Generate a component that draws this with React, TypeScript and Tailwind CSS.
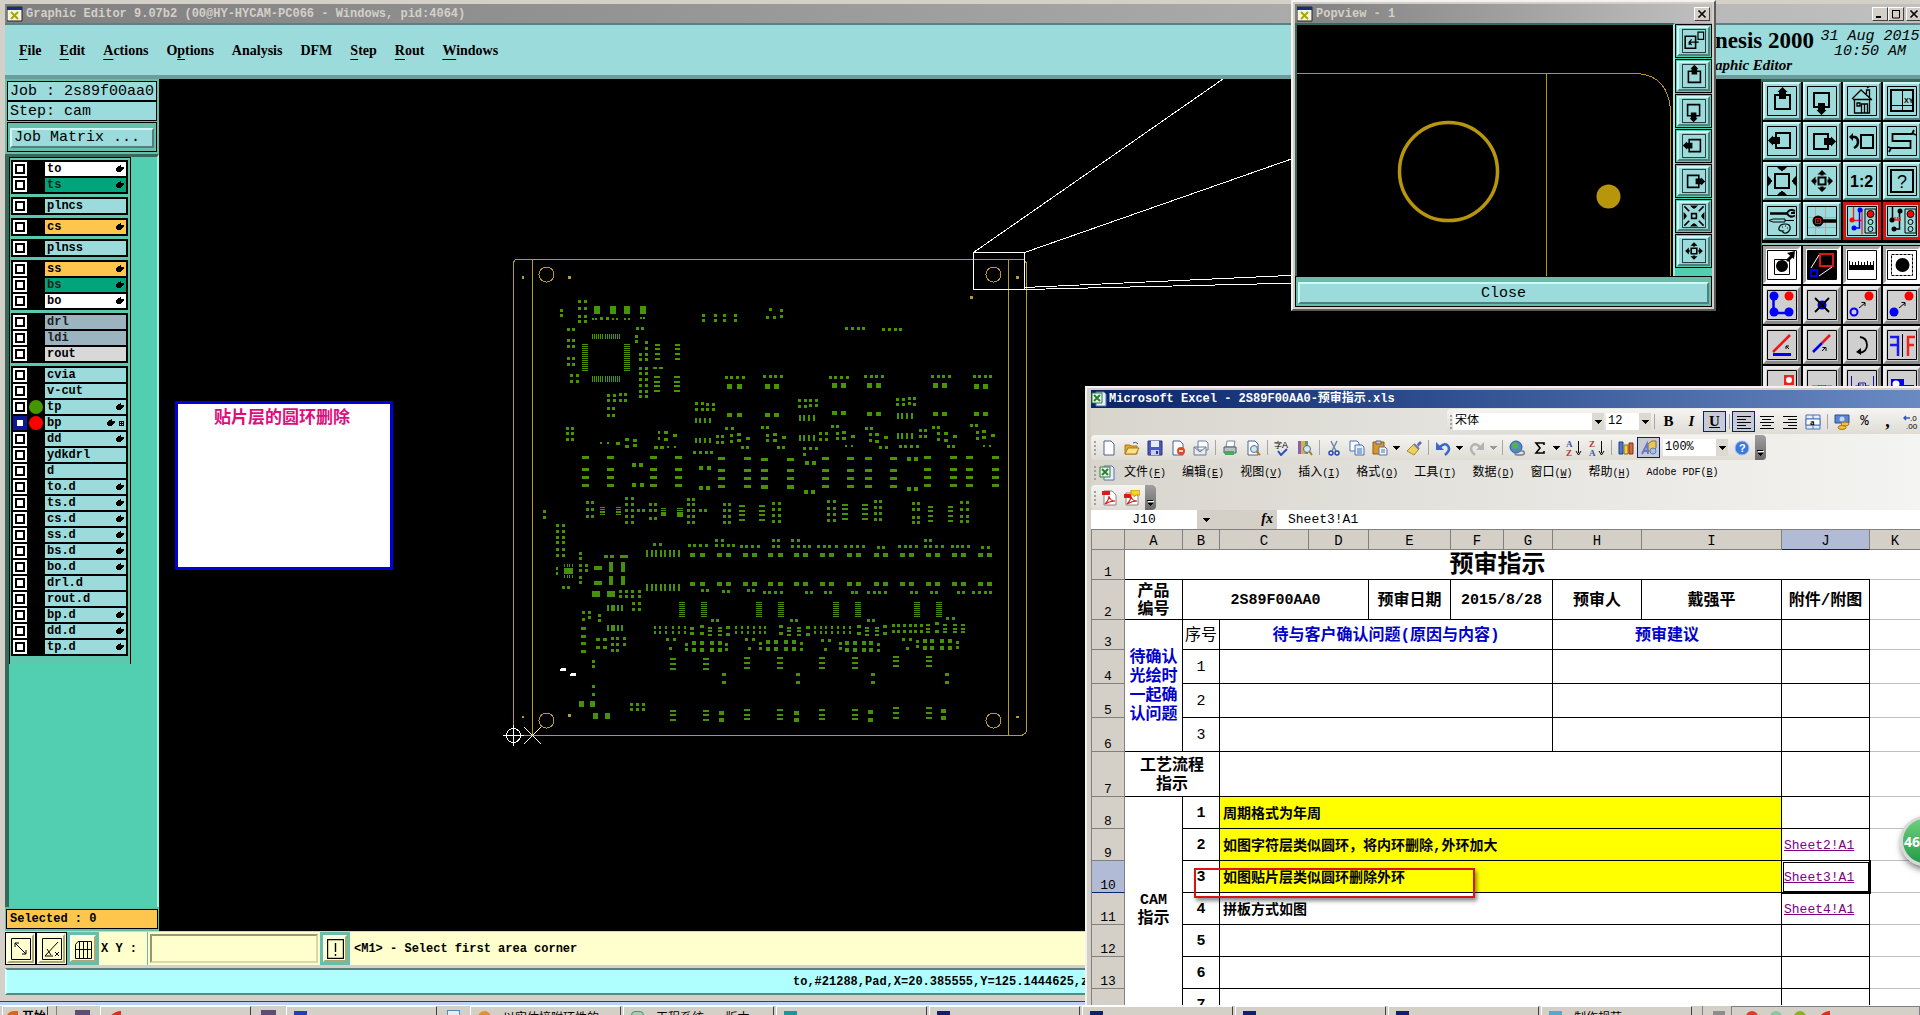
import React from 'react';

const tealBevel = 'border-2 border-t-[#d2f6f6] border-l-[#d2f6f6] border-r-[#4f7f7f] border-b-[#4f7f7f] bg-[#9bdbdb]';
const grayBevel = 'border-3 border-t-[#ececec] border-l-[#ececec] border-r-[#8a8a8a] border-b-[#8a8a8a] bg-[#cfcfcf]';
const whiteBevel = 'border-3 border-t-[#a8a8a8] border-l-[#a8a8a8] border-r-[#ffffff] border-b-[#ffffff] bg-white';
const redBevel = 'border-3 border-[#d41414] bg-[#9bdbdb]';
const winBevel = 'border border-t-white border-l-white border-r-[#404040] border-b-[#404040] bg-[#d4d0c8]';

const mono = "font-['Liberation_Mono','Noto_Sans_CJK_SC',monospace]";
const serif = "font-['Liberation_Serif','Noto_Sans_CJK_SC',serif]";
const cjk = "font-['Liberation_Mono','Noto_Sans_CJK_SC',sans-serif]";

/* ---------- layer list ---------- */

type Layer = { name: string; bg?: string; hand?: boolean; dot?: string; active?: boolean };

const AQUA = 'bg-[#9bdbdb] text-black';
const GREEN = 'bg-[#02a47c] text-[#042a18]';
const ORANGE = 'bg-[#fec64d] text-black';
const WHITE = 'bg-white text-black';
const SLATE = 'bg-[#9bb4bf] text-[#202020]';
const SILVER = 'bg-[#d8d8d8] text-black';

const layerGroups: Layer[][] = [
  [{ name: 'to', bg: WHITE, hand: true }, { name: 'ts', bg: GREEN, hand: true }],
  [{ name: 'plncs' }],
  [{ name: 'cs', bg: ORANGE, hand: true }],
  [{ name: 'plnss' }],
  [{ name: 'ss', bg: ORANGE, hand: true }, { name: 'bs', bg: GREEN, hand: true }, { name: 'bo', bg: WHITE, hand: true }],
  [{ name: 'drl', bg: SLATE }, { name: 'ldi', bg: SLATE }, { name: 'rout', bg: SILVER }],
  [
    { name: 'cvia' },
    { name: 'v-cut' },
    { name: 'tp', hand: true, dot: 'bg-[#469600]' },
    { name: 'bp', hand: true, dot: 'bg-[#ff0000]', active: true },
    { name: 'dd', hand: true },
    { name: 'ydkdrl' },
    { name: 'd' },
    { name: 'to.d', hand: true },
    { name: 'ts.d', hand: true },
    { name: 'cs.d', hand: true },
    { name: 'ss.d', hand: true },
    { name: 'bs.d', hand: true },
    { name: 'bo.d', hand: true },
    { name: 'drl.d' },
    { name: 'rout.d' },
    { name: 'bp.d', hand: true },
    { name: 'dd.d', hand: true },
    { name: 'tp.d', hand: true },
  ],
];

const Hand = () => (
  <svg width="8" height="8" viewBox="0 0 8 8" shapeRendering="crispEdges">
    <path d="M4 0h1v2h3v2h-1v1h-1v1h-1v1h-4v-1h-1v-3h1v-1h1v-1h2z" fill="#000" />
  </svg>
);

const LayerRow = ({ layer }: { layer: Layer }) => (
  <label className="flex h-[14px] items-center">
    <input
      type="checkbox"
      className={`m-[2px] size-[10px] shrink-0 appearance-none border-2 bg-white ring-2 ${
        layer.active ? 'border-[#0a1a96] ring-[#0a1a96]' : 'border-black ring-white'
      }`}
    />
    <span className="flex w-[18px] justify-center">
      {layer.dot && <span className={`size-[14px] rounded-full ${layer.dot}`}></span>}
    </span>
    <span className={`flex h-[14px] flex-1 items-center gap-1 pl-[2px] pr-[2px] text-[12px] font-bold leading-[14px] ${layer.bg || AQUA}`}>
      <span className="flex-1">{layer.name}</span>
      {layer.hand && <Hand />}
      {layer.active && (
        <svg width="5" height="5" viewBox="0 0 5 5" shapeRendering="crispEdges">
          <path d="M0 0h5v5h-5zM1 1v1h1v-1zM3 1v1h1v-1zM1 3v1h1v-1zM3 3v1h1v-1z" fillRule="evenodd" />
        </svg>
      )}
    </span>
  </label>
);

const Sidebar = () => (
  <aside className={`flex w-[154px] flex-col bg-[#67bfa9] ${mono}`}>
    <div className="mx-[2px] mt-[2px] h-[20px] overflow-hidden border border-black bg-[#9bdbdb] pl-[2px] text-[15px] leading-[20px] whitespace-nowrap">
      Job : 2s89f00aa0
    </div>
    <div className="mx-[2px] h-[20px] border border-black bg-[#9bdbdb] pl-[2px] text-[15px] leading-[19px]">Step: cam</div>
    <div className="mx-[2px] mt-px border border-black p-[2px]">
      <button className={`h-[20px] w-full pl-[2px] text-left text-[15px] leading-[16px] ${tealBevel}`}>Job Matrix ...</button>
    </div>
    <div className="mt-[2px] flex flex-1 items-start border-l-4 border-r-2 border-t-[3px] border-l-[#36695c] border-r-[#a5f0de] border-t-[#36695c] bg-[#52cfb0]">
      <div className="flex w-[122px] flex-col gap-[3px] border border-b-0 border-black bg-[#5cc8ae] px-px pt-[2px] pb-[8px]">
        {layerGroups.map((group, i) => (
          <div key={i} className="flex w-[117px] flex-col gap-[2px] border-2 border-black bg-black">
            {group.map((layer) => (
              <LayerRow key={layer.name} layer={layer} />
            ))}
          </div>
        ))}
      </div>
    </div>
    <div className="mx-px mt-[2px] mb-[2px] h-[20px] border border-black bg-[#fec64d] pl-[3px] text-[12px] font-bold leading-[18px]">
      Selected : 0
    </div>
  </aside>
);

/* ---------- board drawing ---------- */

// Every entry is [pad width, pad height, "cx,cy cx,cy ..."] in board units.
type Pads = [number, number, string];

const grid = (xs: number[], ys: number[]) => xs.flatMap((x) => ys.map((y) => `${x},${y}`)).join(' ');
const run = (from: number, step: number, n: number) => Array.from({ length: n }, (_, i) => from + i * step);

const upperPads: Pads[] = [
  [17, 24, '276,210 322,210 362,210 407,210'],
  [6, 6, '265,237 273,237 322,237 333,237 357,237 367,237 403,234 410,234 289,609 308,609 480,621 499,621 988,618 1003,618 1379,618 1396,618'],
  [9, 9, '175,212 175,227 289,236 306,236 392,266 406,266 389,288 389,304'],
  [9, 9, grid([226, 243], [184, 205, 229, 244])],
  [9, 9, grid([195, 211], [268, 301, 319, 355, 373])],
  [9, 9, grid([204, 221], [406, 424])],
  [4, 15, grid(run(264, 6, 14), [290])],
  [4, 18, grid(run(264, 6, 14), [417])],
  [17, 4, grid([243, 362], run(314, 6, 14))],
  [9, 9, grid([400, 417], [343, 358, 384, 401, 419, 436, 454, 469]) + ' 417,308 417,325'],
  [14, 6, grid([449, 506], [314, 327, 342, 356])],
  [16, 6, grid([447, 504], [411, 426, 438, 453])],
  [10, 6, '440,384 459,384'],
  [9, 9, grid([580, 614, 640, 671], [227, 241])],
  [8, 10, '771,208 802,211 762,234 782,234 802,231'],
  [9, 9, grid([988, 1005, 1022, 1037], [265]) + ' ' + grid([1094, 1111, 1127, 1142], [268])],
  [9, 9, grid([645, 661, 677, 694, 942, 957, 974, 990], [412])],
  [9, 9, grid([754, 770, 787, 802, 1043, 1058, 1074, 1090, 1233, 1249, 1265, 1281, 1353, 1368, 1385, 1400], [409])],
  [14, 14, '654,439 683,439 762,439 788,439 954,435 979,435 1053,436 1080,436 1241,436 1267,436 1358,438 1384,438'],
  [14, 12, '654,525 683,525 762,525 788,525 954,520 979,520 1053,522 1080,522 1241,522 1267,522 1358,523 1384,523'],
  [9, 9, '309,467 326,467 343,464 359,464 309,482 326,482 343,482 359,482 309,505 325,505 309,525 325,525'],
  [9, 9, grid([192, 207], [565, 580, 598])],
  [10, 8, '336,610 362,598 383,601 362,619 383,616 473,577 473,598 499,586 444,622 460,622'],
  [6, 9, '453,577 453,595'],
  [9, 9, '560,490 577,490 593,493 608,493 560,508 577,508 593,508 608,508'],
  [9, 9, '854,482 871,482 886,482 902,482 854,499 871,499 886,496 902,496'],
  [9, 9, '1133,478 1150,478 1167,475 1183,475 1133,493 1150,493 1167,490 1183,493'],
  [5, 15, grid([559, 570, 585, 599], [541, 601])],
  [5, 18, grid([855, 867, 881, 895], [534, 594])],
  [5, 18, grid([1135, 1147, 1160, 1174], [528, 587])],
  [8, 8, '554,637 571,637 588,637 604,637 868,625 886,625 902,625 868,643 1141,619 1157,619 1173,619 1190,619'],
  [8, 9, '646,565 662,565 620,590 634,590 620,607 634,607 660,587 660,604 691,622 706,622 748,562 763,562 762,587 762,601 794,622 809,622'],
  [11, 8, '681,583 681,601 707,594 783,583 783,601 809,592 981,578 981,596 1006,589 1076,583 1076,603 1101,592 1270,580 1270,601 1296,589 1380,574 1380,592 1405,586'],
  [8, 9, '914,580 931,580 914,598 931,598 947,560 962,560 963,580 963,596 1045,565 1058,565 1056,583 1056,601 1085,622 1101,622'],
  [8, 9, '1199,571 1213,571 1199,589 1213,589 1236,562 1250,562 1250,580 1250,598 1279,619 1294,619 1344,556 1359,556 1361,577 1361,595'],
  [20, 9, grid([244, 315, 438, 509, 1219, 1293, 1338, 1412], [652, 688, 712, 736])],
  [20, 9, grid([631, 706, 928, 999, 1051, 1122], [655, 691, 715, 739])],
  [20, 9, grid([754, 828], [658, 691, 715, 741])],
  [11, 13, '382,676 403,676 383,735 405,735 574,685 596,685 573,744 594,744 1165,657 1186,657 1165,747 1187,747 874,669 895,669 872,756 892,756'],
];

const lowerPads: Pads[] = [
  [20, 8, grid([244, 315, 438, 509, 1219, 1293, 1338, 1412], [16]) + ' ' + grid([631, 706, 754, 828, 928, 999, 1051, 1122], [19])],
  [8, 8, '127,94 127,112'],
  [9, 9, grid([249, 263], [67, 87, 109])],
  [14, 3, grid([292, 338], [82, 87, 93, 98, 104])],
  [9, 9, grid([361, 377], [55, 73, 91, 109, 127])],
  [9, 9, '395,91 409,91 429,73 443,73 429,91 443,91 429,115 443,115 572,91 585,91'],
  [14, 4, grid([466], [85, 91, 97])],
  [17, 4, grid([513], [85, 91, 97])],
  [17, 12, '513,104'],
  [14, 10, '466,105'],
  [9, 9, grid([538, 551], [58, 73, 91, 109, 127])],
  [9, 9, grid([640, 654], [73, 91, 109, 127])],
  [17, 6, grid([689, 746], [78, 92, 105, 120])],
  [9, 9, grid([780, 796], [70, 88, 106, 124])],
  [9, 9, grid([937, 953], [64, 85, 103, 121])],
  [17, 6, grid([983, 1040], [75, 88, 102, 117])],
  [9, 9, grid([1071, 1086], [64, 82, 100, 118])],
  [9, 9, grid([1179, 1193], [70, 88, 111, 127])],
  [14, 6, grid([1227, 1284], [81, 94, 108, 123])],
  [9, 9, grid([1317, 1332], [67, 87, 109, 124])],
  [9, 9, grid([164, 181], [136, 154, 172, 187, 208, 226])],
  [26, 18, '195,273'],
  [4, 9, grid([185, 192, 199, 206], [256, 289])],
  [5, 8, '162,266 162,280'],
  [9, 9, '229,220 229,235 229,257 246,257 229,271 246,271 229,291 229,307 181,322 195,322'],
  [11, 9, '302,229 320,229 347,229 360,229'],
  [23, 12, '279,264 279,309'],
  [11, 30, '316,261 350,261'],
  [11, 26, '316,301 350,301'],
  [23, 18, '273,342 316,342'],
  [9, 9, grid([343, 360, 377, 397], [335, 349])],
  [9, 9, grid([380, 397], [370, 388])],
  [5, 21, grid(run(419, 13, 8), [220, 322])],
  [9, 8, '440,193 457,193'],
  [9, 9, grid([541, 555, 571, 588, 617, 634, 651, 665], [196])],
  [9, 9, grid([617, 634, 780, 794, 834, 850, 1213, 1229], [181])],
  [9, 9, grid([688, 702, 721, 736, 780, 794, 834, 850, 868, 884, 908, 924, 941, 959], [199])],
  [9, 9, grid([985, 1001, 1019, 1036, 1139, 1155, 1171, 1187, 1213, 1229, 1245, 1261, 1290, 1304, 1320, 1336], [199])],
  [9, 9, '1080,202 1095,202 1376,202 1392,202'],
  [14, 12, grid([549, 576, 626, 651, 700, 725, 771, 799, 844, 871, 919, 946, 995, 1022, 1072, 1098, 1147, 1173, 1221, 1247, 1296, 1321, 1370, 1395], [225, 312])],
  [8, 8, '577,332 591,332 637,335 651,335 708,331 722,331'],
  [9, 8, grid([754, 769, 785, 802, 875, 889, 928, 942, 1005, 1018, 1051, 1067, 1083, 1099, 1174, 1189, 1230, 1246, 1307, 1321, 1350, 1367, 1383, 1398], [337])],
  [17, 3, grid([518, 581, 738, 801, 957, 1020, 1188, 1251], run(367, 6, 8))],
  [5, 18, grid([308, 318, 324, 335, 348], [384, 444])],
  [9, 9, '238,397 255,397 238,417 255,412 283,406 283,421'],
  [14, 9, '238,446 238,468 238,490 238,513'],
  [10, 10, grid([279, 300], [480, 504])],
  [9, 9, grid([320, 335, 355], [476, 493]) + ' 320,511 335,511'],
  [6, 9, grid([442, 457, 474, 492, 510, 528, 674, 690, 707, 725, 741, 757, 898, 914, 930, 947, 964, 981, 998], [443, 457])],
  [8, 9, grid([1121, 1137, 1153, 1169, 1185, 1201], [437, 454])],
  [12, 10, '549,446 549,460 576,440 576,462 651,443 651,464 802,440 802,462 877,443 877,464 1025,440 1025,462 1099,440 1099,462 1247,432 1247,455'],
  [11, 5, grid([598, 627, 824, 852, 1046, 1074], [443, 453, 463]) + ' ' + grid([1219, 1268, 1297, 1320], [435, 445, 455])],
  [9, 8, '606,421 619,421 831,421 845,421 1051,421 1066,421 1276,415 1292,415'],
  [8, 10, '477,480 497,480 486,506 531,494 531,509 702,480 722,480 711,506 742,491 742,506 919,483 939,483 928,509 970,491 970,506 1150,480 1170,480 1161,506 1190,485 1190,500'],
  [12, 11, grid([553, 576, 604, 627], [489, 510]) + ' ' + grid([764, 787, 817, 839], [486, 507])],
  [12, 11, grid([991, 1012, 1037, 1058], [489, 510]) + ' ' + grid([1211, 1233, 1261, 1283], [483, 504])],
  [8, 8, '645,494 645,509 859,491 859,508 1079,494 1079,510 1304,488 1304,502'],
  [17, 7, grid([493, 587], [538, 552, 566]) + ' ' + grid([704, 798, 918, 1012], [535, 548, 563])],
  [17, 6, grid([1129, 1223], [531, 543, 558])],
  [11, 10, '638,585 638,607 849,585 849,607 1063,585 1063,607 1273,585 1273,607'],
  [9, 10, '266,545 266,559 266,621 266,645'],
  [14, 18, '232,672 265,672 272,708 305,708'],
  [8, 9, grid([375, 392, 409], [673, 688])],
  [17, 6, grid([493, 587], [693, 706, 720]) + ' ' + grid([704, 798, 918, 1012], [690, 704, 718])],
  [17, 6, grid([1129, 1223], [685, 699, 714])],
  [13, 11, '631,699 631,720 844,698 844,720 1055,696 1055,718 1264,693 1264,714'],
];

const toPath = (pads: Pads[]) =>
  pads
    .map(([w, h, pts]) =>
      pts
        .split(' ')
        .map((p) => {
          const [x, y] = p.split(',').map(Number);
          const px = Math.round((x - w / 2) / 2.851);
          const py = Math.round((y - h / 2) / 3);
          const pw = Math.max(1, Math.round(w / 2.851));
          const ph = Math.max(1, Math.round(h / 3));
          return `M${px} ${py}h${pw}v${ph}h-${pw}z`;
        })
        .join(''),
    )
    .join('');

const Board = () => (
  <svg className="absolute left-0 top-0" width="1602" height="852" viewBox="159 79 1602 852" shapeRendering="crispEdges">
    <g fill="none" stroke="#b89a2e" strokeWidth="1">
      <path d="M516.5 259.5H1022.5Q1026.5 260.5 1026.5 265V729Q1026.5 734.5 1021 735.5H513.5V264Q513.5 260 516.5 259.5zM532.5 259.5V735.5M1008.5 259.5V735.5" />
      <circle cx="546.5" cy="274.5" r="7.5" />
      <circle cx="993.5" cy="274.5" r="7.5" />
      <circle cx="546.5" cy="720.5" r="7.5" />
      <circle cx="993.5" cy="720.5" r="7.5" />
    </g>
    <path d="M522 276h2v3h-2zM568 276h3v3h-3zM1016 276h3v3h-3zM970 296h3v3h-3zM522 716h2v2h-2zM568 714h3v3h-3zM1016 716h3v2h-3z" fill="#b89a2e" />
    <path d={toPath(upperPads)} transform="translate(500 240)" fill="#469600" />
    <path d={toPath(lowerPads)} transform="translate(500 480)" fill="#46900c" />
    <path d="M561 668h5v3h-6v-2zM571 673h5v3h-6v-2z" fill="#fff" />
    <g fill="none" stroke="#fff" strokeWidth="1">
      <path d="M973.5 252.5h51v37h-51zM973.5 252.5L1223 79M1024.5 252.5L1300 156M1024.5 287.5L1300 275M1024.5 289.5L1300 283" />
      <circle cx="513.5" cy="735.5" r="7" />
      <path d="M503 735.5h21M513.5 725v21M524 727l17 17M541 727l-17 17" />
    </g>
  </svg>
);

/* ---------- tool icons, drawn on a 30x30 cell ---------- */

const PanIcon = ({ turn = 0 }: { turn?: number }) => (
  <g transform={`rotate(${turn} 15 15)`}>
    <path d="M8 9h15v14H8z" fill="none" stroke="#000" strokeWidth="2" />
    <path d="M15.5 1l5 5h-1.5v7h-7v-7h-1.500z" fill="#000" />
  </g>
);

const Heads = ({ r, inward }: { r: number; inward?: boolean }) => (
  <>
    {[0, 90, 180, 270].map((a) => (
      <path
        key={a}
        transform={`rotate(${a} 15 15)`}
        d={inward ? `M10 ${15 - r - 4}h10l-3 3h-1v1h-2v-1h-1z` : `M15 ${15 - r - 4}l4.500 4.500h-3v1h-3v-1h-3z`}
      />
    ))}
  </>
);

const Lamp = () => (
  <>
    <path d="M18 3h11v24H18z" fill="#9bdbdb" stroke="#000" />
    <circle cx="23.500" cy="8" r="3.500" fill="#f00" stroke="#000" />
    <circle cx="23.500" cy="16" r="2.500" fill="none" stroke="#000" />
    <circle cx="23.500" cy="23" r="2.500" fill="none" stroke="#000" />
  </>
);

const icons: Record<string, React.ReactNode> = {
  up: <PanIcon />,
  down: <PanIcon turn={180} />,
  left: <PanIcon turn={270} />,
  right: <PanIcon turn={90} />,
  popout: (
    <>
      <path d="M4 9h13v15H4z" fill="none" stroke="#000" strokeWidth="2" />
      <path d="M20 4h7v9h-7zM9 16.500h12M12 13l-3 3.500 3 3.500M9 16v4" fill="none" stroke="#000" strokeWidth="1.500" />
    </>
  ),
  home: (
    <path
      d="M5 13L14 4l11 10M6 13.500h19M7.500 14v13h15V14M14.500 27v-9h6v9M17.500 18v9M10 17h3v3h-3zM19.500 8V4h3v7M20 2l3-2"
      fill="none"
      stroke="#000"
      strokeWidth="1.3"
    />
  ),
  xy: (
    <>
      <path d="M4 4h22v21H4z" fill="none" stroke="#000" strokeWidth="2" />
      <path d="M15.500 4v21M4 19.500h22" stroke="#000" />
      <text x="17" y="17" fontSize="7" fontWeight="bold" fontFamily="Liberation Sans">XY</text>
    </>
  ),
  back: (
    <>
      <path d="M14 9h12v13H14z" fill="none" stroke="#000" strokeWidth="2" />
      <path d="M5 11h3q3 1 3 5t-4 6" fill="none" stroke="#000" strokeWidth="2.500" />
      <path d="M2 11l4-4v8z" />
    </>
  ),
  snake: <path d="M27 4l-2 4H5.500v7h18v7H4l-2 4M25 7l4 2M4 22l-3-1" fill="none" stroke="#000" strokeWidth="1.800" />,
  zoomOut: (
    <>
      <path d="M8 8h14v14H8z" fill="none" stroke="#000" strokeWidth="2" />
      <Heads r={10} inward />
    </>
  ),
  zoomIn: (
    <>
      <path d="M11.500 11.500h7v7h-7z" fill="none" stroke="#000" strokeWidth="2" />
      <Heads r={7} />
    </>
  ),
  shrink: (
    <>
      <path d="M12 12h6v6h-6z" fill="none" stroke="#000" strokeWidth="2" />
      <Heads r={9} inward />
      <path d="M3 3l6 6M27 3l-6 6M3 27l6-6M27 27l-6-6" stroke="#000" strokeWidth="2" />
    </>
  ),
  ratio: <text x="3" y="21" fontSize="16" fontWeight="bold" fontFamily="Liberation Sans">1:2</text>,
  help: (
    <>
      <path d="M4 4h22v22H4z" fill="none" stroke="#000" strokeWidth="2" />
      <text x="10" y="22" fontSize="18" fontFamily="Liberation Sans">?</text>
    </>
  ),
  tools: (
    <>
      <path d="M3 7.500h18" stroke="#000" strokeWidth="2.500" />
      <path d="M28 5q-6-3-8 2.500 3 5 8 2M28 7h-4" fill="none" stroke="#000" strokeWidth="2" />
      <path d="M2 14.500l4-1.500h12v3H6zM18 14.500h9" fill="none" stroke="#000" />
      <path d="M12 22q1-4 6-4 6 0 5 5-2 5-6 4-2-1-1-2-5 0-4-3zM15 21h1M18 20h1M20 22h1" fill="none" stroke="#000" strokeWidth="1.200" />
    </>
  ),
  probe: (
    <>
      <path d="M8.500 1v28M18.500 1v28M1 11.500h28M1 21.500h28" stroke="#b5a8a8" />
      <path d="M15 15h14" stroke="#000" strokeWidth="3.500" />
      <circle cx="11" cy="15" r="5.500" />
      <path d="M8.500 12.500h5v5h-5zM10.500 14.500h1v1h-1z" fill="none" stroke="#e01010" />
    </>
  ),
  netRed: (
    <>
      <path d="M6.500 1v12M6 14.500h9v14M15 3v24" fill="none" stroke="#f02020" strokeWidth="1.300" />
      <path d="M12.500 4v18H8" fill="none" stroke="#00f" strokeWidth="1.500" />
      <circle cx="13" cy="4" r="2.500" fill="#00f" />
      <circle cx="7" cy="22" r="2.500" fill="#00f" />
      <circle cx="5" cy="14" r="2.500" fill="#f00" />
      <Lamp />
    </>
  ),
  netBlack: (
    <>
      <path d="M5.500 1v12M12.500 5v18H7" fill="none" stroke="#000" strokeWidth="1.500" />
      <path d="M6 14h8M8 11v3M10.500 11v3M13 11v3" stroke="#f02020" strokeWidth="1.500" />
      <circle cx="13" cy="5" r="2.500" />
      <circle cx="7" cy="23" r="2.500" />
      <circle cx="5" cy="14" r="2.500" />
      <Lamp />
    </>
  ),
  pick: (
    <>
      <path d="M7.500 9.500h15v15h-15z" fill="none" stroke="#000" />
      <circle cx="15" cy="16" r="6" />
      <path d="M20 11l5-5" stroke="#000" strokeWidth="3" />
      <path d="M20 3l8-2-1 8z" />
    </>
  ),
  window: (
    <>
      <path d="M1 1h28v28H1z" />
      <path d="M13 4h13v12H13z" fill="none" stroke="#e01414" strokeWidth="2" />
      <path d="M4 20h6v6H4z" fill="none" stroke="#0000e0" strokeWidth="2" />
      <path d="M4 18l8-13M12 26l13-9" stroke="#fff" />
    </>
  ),
  ruler: <path d="M2 11h1v4h2v-3h1v3h2v-3h1v3h2v-4h1v4h2v-3h1v3h2v-3h1v3h2v-4h1v4h2v-3h1v3h2v-4h1v9H2z" />,
  region: (
    <>
      <path d="M4.500 4.500h21v21h-21z" fill="none" stroke="#000" strokeDasharray="3 1" />
      <circle cx="15.500" cy="15" r="7" />
    </>
  ),
  net: (
    <>
      <path d="M6.500 6v17H22" fill="none" stroke="#00f" strokeWidth="2.500" />
      <circle cx="7" cy="6" r="4.500" fill="#00f" />
      <circle cx="7" cy="22" r="4.500" fill="#00f" />
      <circle cx="22" cy="22" r="4.500" fill="#00f" />
      <circle cx="22" cy="6" r="4.500" fill="#f00" />
    </>
  ),
  erase: (
    <>
      <circle cx="15" cy="15" r="4.500" fill="#0000d0" />
      <path d="M8 8l14 14M22 8L8 22" stroke="#000" strokeWidth="1.800" />
    </>
  ),
  copy: (
    <>
      <circle cx="7" cy="22" r="3.500" fill="none" stroke="#00f" strokeWidth="2" />
      <circle cx="22" cy="6" r="4.500" fill="#f00" />
      <path d="M12 18l6-5M14.500 12.500H18V16" fill="none" stroke="#000" />
    </>
  ),
  move: (
    <>
      <circle cx="7" cy="22" r="4.500" fill="#00f" />
      <circle cx="22" cy="6" r="4.500" fill="#f00" />
      <path d="M12 18l6-5M14.500 12.500H18V16" fill="none" stroke="#000" />
    </>
  ),
  angle: (
    <>
      <path d="M6 22L23 5" stroke="#e81818" strokeWidth="2.500" />
      <path d="M6 24.500h18" stroke="#00e" strokeWidth="3" />
      <path d="M22 19l-3-3M19 19v-3h3" fill="none" stroke="#000" />
    </>
  ),
  stretch: (
    <>
      <path d="M15 13l8-8" stroke="#e81818" strokeWidth="2.500" />
      <path d="M6 22l9-9" stroke="#00e" strokeWidth="2.500" />
      <path d="M15 21l3-3M15.500 17.500H19V21" fill="none" stroke="#000" />
    </>
  ),
  rotate: (
    <>
      <path d="M13 7q7 1 7 8t-8 8" fill="none" stroke="#000" strokeWidth="1.800" />
      <path d="M9 22l5-4v7z" />
    </>
  ),
  mirror: (
    <>
      <path d="M3 7h8v19M3 15h8" fill="none" stroke="#1818f0" strokeWidth="2.500" />
      <path d="M28 7h-7v19M27 15h-6" fill="none" stroke="#f02020" strokeWidth="2.500" />
      <path d="M15.500 4v23" stroke="#000" />
    </>
  ),
  corner: (
    <>
      <path d="M17 5h10v10H17z" fill="#f02020" />
      <circle cx="22" cy="10" r="3" fill="#fff" />
      <path d="M10 21l4-4" stroke="#000" strokeWidth="2" />
    </>
  ),
  merge: (
    <>
      <path d="M5 17h7M18 17h7" stroke="#f02020" strokeWidth="3" />
      <path d="M11 17h8" stroke="#00e" strokeWidth="3" />
    </>
  ),
  fence: <path d="M4.500 6v16M26.500 6v16M8.500 22v-6h3v-3h7v3h4v6M13 14v8M16 14v8" fill="none" stroke="#1414b0" />,
  pads: (
    <>
      <path d="M4 9h13v6h10v12H4z" fill="#00e" />
      <circle cx="9" cy="14" r="3.500" fill="#fff" />
    </>
  ),
};

const Tool = ({ name, skin }: { name: string; skin: string }) => (
  <button aria-label={name} className={`flex size-[38px] shrink-0 items-center justify-center ${skin}`}>
    <svg width="30" height="30" viewBox="0 0 30 30" className="shrink-0">
      <path d="M0.500 0.500h29v29h-29z" fill="none" stroke="#000" />
      {icons[name]}
    </svg>
  </button>
);

const tealTools = [
  'up', 'down', 'home', 'xy',
  'left', 'right', 'back', 'snake',
  'zoomOut', 'zoomIn', 'ratio', 'help',
  'tools', 'probe', 'netRed', 'netBlack',
];
const editTools = [
  'pick', 'window', 'ruler', 'region',
  'net', 'erase', 'copy', 'move',
  'angle', 'stretch', 'rotate', 'mirror',
  'corner', 'merge', 'fence', 'pads',
];

const Toolbox = () => (
  <aside className="w-[159px] shrink-0 overflow-hidden border-l border-t-3 border-l-[#36695c] border-t-[#36695c] bg-black">
    <div className="grid grid-cols-[repeat(4,38px)] gap-[2px] border-b-2 border-b-[#8fc8bc] pl-px pb-[3px]">
      {tealTools.map((t) => (
        <Tool key={t} name={t} skin={t.startsWith('net') ? redBevel : tealBevel} />
      ))}
    </div>
    <div className="grid grid-cols-[repeat(4,38px)] gap-[2px] pl-px pt-px">
      {editTools.map((t, i) => (
        <Tool key={t} name={t} skin={i < 4 ? whiteBevel : grayBevel} />
      ))}
    </div>
  </aside>
);

/* ---------- editor window ---------- */

const XIcon = () => (
  <svg width="16" height="16" viewBox="0 0 16 16" className="shrink-0">
    <path d="M0 1h15v14H0z" fill="#f4f4e4" stroke="#222" />
    <path d="M0 1h15v3H0z" fill="#1a2a80" />
    <path d="M4 6l7 7M11 6l-7 7" stroke="#a8a800" strokeWidth="2" />
  </svg>
);

const CaptionButton = ({ kind }: { kind: 'min' | 'max' | 'close' }) => (
  <button aria-label={kind} className={`flex h-[14px] w-[16px] shrink-0 items-center justify-center ${winBevel}`}>
    <svg width="10" height="10" viewBox="0 0 10 10" fill="none" stroke="#000">
      {kind === 'min' && <path d="M1 8h5" strokeWidth="2" />}
      {kind === 'max' && <path d="M1 1.500h8M1.500 1v8h7v-8" />}
      {kind === 'close' && <path d="M1.500 1.500l7 7M8.500 1.500l-7 7" strokeWidth="1.600" />}
    </svg>
  </button>
);

// [text before the mnemonic, mnemonic, rest]
const menus = [
  ['', 'F', 'ile'],
  ['', 'E', 'dit'],
  ['', 'A', 'ctions'],
  ['O', 'p', 'tions'],
  ['Analysis', '', ''],
  ['DFM', '', ''],
  ['', 'S', 'tep'],
  ['', 'R', 'out'],
  ['', 'W', 'indows'],
];

const EditorHeader = () => (
  <>
    <header className={`flex h-[19px] items-center gap-[3px] bg-linear-to-r from-[#808080] to-[#c0c0c0] pl-[2px] text-[12px] font-bold text-[#d4d0c8] ${mono}`}>
      <XIcon />
      <h1 className="flex-1">Graphic Editor 9.07b2 (00@HY-HYCAM-PC066 - Windows, pid:4064)</h1>
      <div className="-mr-[2px] flex">
        <CaptionButton kind="min" />
        <CaptionButton kind="max" />
        <span className="w-[2px]"></span>
        <CaptionButton kind="close" />
      </div>
    </header>
    <div className="flex h-[56px] border-t-2 border-b-4 border-t-[#5a8080] border-b-[#6c9c9c] bg-[#9bdbdb] pl-[14px]">
      <nav className={`flex flex-1 items-center gap-[18px] text-[14px] font-bold ${serif}`}>
        {menus.map(([a, key, b]) => (
          <button key={a + key + b}>
            {a}
            <span className="underline underline-offset-4">{key}</span>
            {b}
          </button>
        ))}
      </nav>
      <div className={`flex flex-col ${serif}`}>
        <p className="mt-[4px] text-[23px] font-bold leading-[24px]">Genesis 2000</p>
        <p className="mt-[3px] pr-[22px] text-right text-[15px] font-bold italic leading-[18px]">Graphic Editor</p>
      </div>
      <p className={`w-[106px] pt-[4px] pl-[6px] text-center text-[15px] italic leading-[15px] whitespace-nowrap ${mono}`}>
        31 Aug 2015
        <br />
        10:50 AM
      </p>
    </div>
  </>
);

const creamBevel = 'border-2 border-t-[#fffff0] border-l-[#fffff0] border-r-[#a8a878] border-b-[#a8a878] bg-[#feffcd]';

const CommandBar = () => (
  <div className={`mt-px flex h-[33px] items-stretch bg-[#feffcd] text-[12px] font-bold ${mono}`}>
    <span className="flex border border-black p-px">
      <button aria-label="box mode" className={`flex w-[27px] items-center justify-center ${creamBevel}`}>
        <svg width="20" height="22" viewBox="0 0 20 22" fill="none" stroke="#000">
          <path d="M0.500 0.500h19v21h-19zM4 5l11 11M4 9V5h4M15 12v4h-4" />
        </svg>
      </button>
    </span>
    <span className="flex border border-black p-px">
      <button aria-label="angle mode" className={`flex w-[27px] items-center justify-center ${creamBevel}`}>
        <svg width="20" height="22" viewBox="0 0 20 22" fill="none" stroke="#000">
          <path d="M0.500 0.500h19v21h-19zM3 18L16 4M3 18h8M5 11l4 6M13 14l4 4M17 14l-4 4" />
        </svg>
      </button>
    </span>
    <span className="flex bg-[#67bfa9] p-[3px]">
      <button aria-label="grid mode" className={`flex w-[26px] items-center justify-center ${creamBevel}`}>
        <svg width="17" height="20" viewBox="0 0 17 20" fill="none" stroke="#000">
          <path d="M3 2.500h10.500M0.500 5.500L3 2.500M0.500 5.500v14h16v-17h-3M0.500 10.500h16M8.500 2v17M4.500 2v17M12.500 2v17" />
        </svg>
      </button>
    </span>
    <label htmlFor="xy" className="self-center pl-[2px] pr-[10px]">X Y :</label>
    <span className="flex border-l border-l-[#67bfa9] p-[2px]">
      <input id="xy" className="w-[168px] border-2 border-t-[#98986e] border-l-[#98986e] border-r-[#d8d8a8] border-b-[#d8d8a8] bg-[#feffcd] px-1 outline-none" />
    </span>
    <span className="flex bg-[#67bfa9] p-[3px]">
      <button aria-label="alert" className={`flex w-[24px] items-center justify-center ${creamBevel}`}>
        <svg width="17" height="20" viewBox="0 0 17 20" fill="none" stroke="#000">
          <path d="M0.500 0.500h16v19h-16zM8.500 4v9M8.500 15v2" strokeWidth="1.400" />
        </svg>
      </button>
    </span>
    <p className="self-center pl-[4px]">&lt;M1&gt; - Select first area corner</p>
  </div>
);

const Editor = () => (
  <main className="flex min-h-0 flex-1 flex-col border-t-4 border-b-[6px] border-l-[5px] border-[#d4d0c8]">
    <EditorHeader />
    <div className="flex min-h-0 flex-1 bg-black">
      <Sidebar />
      <section className="relative min-w-0 flex-1 overflow-hidden">
        <Board />
        <p className={`absolute left-[16px] top-[322px] h-[169px] w-[218px] border-3 border-[#0000dc] bg-white pt-[2px] pr-[4px] text-center text-[17px] font-bold leading-[26px] text-[#dc0e7c] ${cjk}`}>
          贴片层的圆环删除
        </p>
      </section>
      <Toolbox />
    </div>
    <CommandBar />
    <footer className={`mt-[3px] flex h-[27px] items-center border-2 border-t-[#5a8080] border-l-[#d8ffff] border-b-[#5a8888] bg-[#b0ffff] pl-[786px] text-[12px] font-bold ${mono}`}>
      to,#21288,Pad,X=20.385555,Y=125.1444625,z
    </footer>
  </main>
);

/* ---------- popview ---------- */

const popTools = ['popout', 'up', 'down', 'left', 'right', 'shrink', 'zoomIn'];

const Popview = () => (
  <section className="absolute left-[1291px] top-0 flex h-[311px] w-[425px] flex-col border-2 border-t-[#f4f2ee] border-l-[#f4f2ee] border-r-[#5a5a5a] border-b-[#5a5a5a] bg-[#d4d0c8] p-[2px]">
    <header className={`flex h-[19px] shrink-0 items-center gap-[3px] bg-linear-to-r from-[#808080] to-[#c0c0c0] px-[2px] text-[12px] font-bold text-[#d4d0c8] ${mono}`}>
      <XIcon />
      <h2 className="flex-1">Popview - 1</h2>
      <CaptionButton kind="close" />
    </header>
    <div className="flex min-h-0 flex-1 bg-black">
      <svg width="380" height="255" viewBox="1297 25 376 251" fill="none" stroke="#b8960c" className="border-2 border-t-[#36695c] border-l-[#36695c] border-r-[#a5e8dc] border-b-[#a5e8dc]">
        <path d="M1297 73.500H1638Q1668 76 1670.500 110V278M1546.500 73.500V278" shapeRendering="crispEdges" />
        <circle cx="1448.500" cy="171.500" r="49" strokeWidth="3.500" />
        <circle cx="1608.500" cy="196.500" r="12" fill="#b8960c" stroke="none" />
      </svg>
      <div className="flex flex-1 flex-col gap-px overflow-hidden bg-[#52cfb0] pt-px">
        {popTools.map((t) => (
          <span key={t} className="flex h-[34px] shrink-0 justify-center border border-black p-px">
            <button aria-label={t} className={`flex flex-1 items-center justify-center ${tealBevel}`}>
              <svg width="24" height="26" viewBox="0 0 30 30">
                <path d="M0.500 0.500h29v29h-29z" fill="none" stroke="#000" />
                {icons[t]}
              </svg>
            </button>
          </span>
        ))}
      </div>
    </div>
    <div className="border border-black bg-[#67bfa9] p-[2px]">
      <button className={`h-[22px] w-full text-[15px] leading-[20px] ${mono} ${tealBevel}`}>Close</button>
    </div>
  </section>
);

/* ---------- spreadsheet window ---------- */

const Caret = ({ dim }: { dim?: boolean }) => (
  <svg width="7" height="4" viewBox="0 0 7 4" shapeRendering="crispEdges">
    <path d="M0 0h7L3.500 4z" fill={dim ? '#9a9a9a' : '#000'} />
  </svg>
);

const Grip = () => (
  <svg width="6" height="16" viewBox="0 0 6 16" className="shrink-0" shapeRendering="crispEdges">
    <path d="M3 1h2v2h-2zM3 5h2v2h-2zM3 9h2v2h-2zM3 13h2v2h-2z" fill="#a5a29c" />
  </svg>
);

const Sep = () => (
  <span className="flex w-[6px] shrink-0 justify-center">
    <span className="h-[15px] w-px bg-[#a6a6a6]"></span>
  </span>
);

const EndCap = () => (
  <span className="ml-[2px] flex w-[11px] shrink-0 items-end justify-center self-stretch rounded-r bg-linear-to-b from-[#a0a0a0] to-[#6a6a6a] pb-[3px]">
    <svg width="7" height="7" viewBox="0 0 7 7" shapeRendering="crispEdges">
      <path d="M0 0h6v1h-6zM0 3h6L3 6z" fill="#000" />
      <path d="M1 1h6v1h-6z" fill="#fff" />
    </svg>
  </span>
);

const XlButton = ({ label, on, children }: { label: string; on?: boolean; children: React.ReactNode }) => (
  <button
    aria-label={label}
    className={`flex h-[21px] w-[23px] shrink-0 items-center justify-center ${on ? 'border border-[#0a246a] bg-[#c9cbd4]' : ''}`}
  >
    {children}
  </button>
);

const Arrow = ({ dim }: { dim?: boolean }) => (
  <button aria-label="more" className="flex w-[11px] shrink-0 justify-center">
    <Caret dim={dim} />
  </button>
);

const Pick = ({ label, value, width }: { label: string; value: string; width: string }) => (
  <span className={`flex h-[17px] shrink-0 items-center bg-white ${width}`}>
    <select aria-label={label} className="h-[17px] min-w-0 flex-1 appearance-none bg-white pl-[2px] leading-[15px] outline-none">
      <option>{value}</option>
    </select>
    <span className="flex h-[17px] w-[12px] items-center justify-center bg-[#dcd9d2]">
      <Caret />
    </span>
  </span>
);

const page = <path d="M3 1h7l3 3v11H3z" fill="#fff" stroke="#4a6290" />;

const xl: Record<string, React.ReactNode> = {
  new: page,
  open: (
    <>
      <path d="M1 5h5l1 1h6v8H1z" fill="#e0a830" stroke="#a87818" />
      <path d="M1 14l3-6h11l-3 6z" fill="#fbe089" stroke="#a87818" />
      <path d="M9 3q3-2 5 1" fill="none" stroke="#3a5a98" />
    </>
  ),
  save: (
    <>
      <path d="M1 1h14v14H1z" fill="#4c58c0" stroke="#28307c" />
      <path d="M4 1h8v6H4z" fill="#e6ecfa" />
      <path d="M4 10h8v5H4z" fill="#c8d0e8" />
      <path d="M9 11h2v3H9z" fill="#28307c" />
    </>
  ),
  permission: (
    <>
      {page}
      <circle cx="11" cy="11" r="4" fill="#dc4a28" />
      <path d="M9 11h4" stroke="#fff" strokeWidth="1.500" />
    </>
  ),
  mail: (
    <>
      <path d="M5 1h8l2 2v7H5z" fill="#fff" stroke="#6880a8" />
      <path d="M1 7h12v8H1zM1 7l6 5 6-5" fill="#e8ecf4" stroke="#6c7890" />
    </>
  ),
  print: (
    <>
      <path d="M5 1h8l-1 6H4z" fill="#fff" stroke="#7888a0" />
      <path d="M2 7h12v6H2z" fill="#b8c0c8" stroke="#505868" />
      <path d="M3 11h9v4H3z" fill="#4ea858" />
    </>
  ),
  preview: (
    <>
      {page}
      <circle cx="9" cy="9" r="3.500" fill="#cfe4f8" stroke="#5a6c88" />
      <path d="M11.500 11.500L15 15" stroke="#b07820" strokeWidth="2" />
    </>
  ),
  spelling: (
    <>
      <text x="0" y="8" fontSize="8" fontFamily="Noto Sans CJK SC">字</text>
      <text x="8" y="8" fontSize="9" fontFamily="Liberation Sans">A</text>
      <path d="M4 11l3 4 6-6" fill="none" stroke="#2a50c0" strokeWidth="2" />
    </>
  ),
  research: (
    <>
      <path d="M1 1h3v13H1z" fill="#8a60b0" />
      <path d="M4 1h4v13H4z" fill="#d8b050" />
      <path d="M8 1h3v13H8z" fill="#58a068" />
      <circle cx="10" cy="9" r="3.500" fill="#d4e6f8" stroke="#5a6c88" />
      <path d="M12.500 11.500L15 15" stroke="#b07820" strokeWidth="2" />
    </>
  ),
  cut: (
    <>
      <path d="M5 1l5 10M11 1L6 11" stroke="#7088a8" strokeWidth="1.500" />
      <circle cx="5" cy="13" r="2" fill="none" stroke="#2848b0" strokeWidth="1.500" />
      <circle cx="11" cy="13" r="2" fill="none" stroke="#2848b0" strokeWidth="1.500" />
    </>
  ),
  copy: (
    <>
      <path d="M1 1h7l2 2v8H1z" fill="#fff" stroke="#4870b8" />
      <path d="M6 5h7l2 2v8H6zM8 9h5M8 11h5M8 13h5" fill="#e4eefc" stroke="#4870b8" />
    </>
  ),
  paste: (
    <>
      <path d="M1 2h11v12H1z" fill="#d8962c" stroke="#8a5c14" />
      <path d="M4 1h5v3H4z" fill="#c8ccd4" stroke="#60646c" />
      <path d="M7 7h6l2 2v6H7zM9 10h4M9 12h4" fill="#f0f4fc" stroke="#5874a8" />
    </>
  ),
  brush: (
    <>
      <path d="M11 4l3-3 2 2-4 4z" fill="#6070b8" />
      <path d="M8 4l5 5-5 6-7-4z" fill="#ecd060" stroke="#a88820" />
      <path d="M8 4l5 5" stroke="#7878a0" strokeWidth="2" />
    </>
  ),
  undo: (
    <>
      <path d="M5 7q5-5 8-1t-3 9" fill="none" stroke="#3a68c8" strokeWidth="2.500" />
      <path d="M1 2v8h8z" fill="#3a68c8" />
    </>
  ),
  redo: (
    <>
      <path d="M11 7q-5-5-8-1t3 9" fill="none" stroke="#b4b4b4" strokeWidth="2.500" />
      <path d="M15 2v8H7z" fill="#b4b4b4" />
    </>
  ),
  link: (
    <>
      <circle cx="7" cy="7" r="6" fill="#4a88d8" stroke="#2c5ca0" />
      <path d="M3 4q4-4 6 0t-2 5q-5 0-4-5z" fill="#58b050" />
      <path d="M6 13q0-3 3-2h5q2 1 1 3-1 1-3 1H8q-2 0-2-2z" fill="none" stroke="#6c8098" strokeWidth="1.500" />
    </>
  ),
  sum: <path d="M12 5V3H4l4 5-4 5h8v-2" fill="none" stroke="#000" strokeWidth="1.600" />,
  sortAsc: (
    <>
      <text x="0" y="7" fontSize="9" fontFamily="Liberation Serif" fontWeight="bold" fill="#3858a8">A</text>
      <text x="0" y="16" fontSize="9" fontFamily="Liberation Serif" fontWeight="bold" fill="#b03838">Z</text>
      <path d="M12.500 1v12M10 11l2.500 4L15 11" fill="none" stroke="#000" />
    </>
  ),
  sortDesc: (
    <>
      <text x="0" y="7" fontSize="9" fontFamily="Liberation Serif" fontWeight="bold" fill="#b03838">Z</text>
      <text x="0" y="16" fontSize="9" fontFamily="Liberation Serif" fontWeight="bold" fill="#3858a8">A</text>
      <path d="M12.500 1v12M10 11l2.500 4L15 11" fill="none" stroke="#000" />
    </>
  ),
  chart: (
    <>
      <path d="M1 2h4v12H1z" fill="#5078d0" stroke="#203c80" />
      <path d="M6 5h4v9H6z" fill="#f0d050" stroke="#907010" />
      <path d="M11 3h4v11h-4z" fill="#d86838" stroke="#803010" />
    </>
  ),
  drawing: (
    <>
      <path d="M7 4l4-3h4v7l-3 3H7z" fill="#e8c860" stroke="#907020" />
      <path d="M1 14L6 4l1 10M3 11h5" fill="none" stroke="#6878c8" strokeWidth="2" />
      <circle cx="12" cy="11" r="3" fill="#a8c0e8" stroke="#6080b8" />
    </>
  ),
  help: (
    <>
      <circle cx="8" cy="8" r="7" fill="#3c78dc" stroke="#a8c4f0" />
      <text x="5" y="12" fontSize="11" fontFamily="Liberation Sans" fontWeight="bold" fill="#fff">?</text>
    </>
  ),
  alignLeft: <path d="M1 2.500h14M1 5.500h9M1 8.500h14M1 11.500h9M1 14.500h14" stroke="#000" />,
  alignCenter: <path d="M1 2.500h14M3 5.500h9M1 8.500h14M3 11.500h9M1 14.500h14" stroke="#000" />,
  alignRight: <path d="M1 2.500h14M6 5.500h9M1 8.500h14M6 11.500h9M1 14.500h14" stroke="#000" />,
  mergeCells: (
    <>
      <path d="M1 1h14v14H1zM1 5h14M1 11h14M8 1v4M8 11v4" fill="#e4eefc" stroke="#4870b8" />
      <path d="M1 5h14v6H1z" fill="#fff" stroke="#4870b8" />
      <text x="5" y="11" fontSize="9" fontFamily="Liberation Serif" fontWeight="bold">a</text>
    </>
  ),
  currency: (
    <>
      <path d="M1 1h14v8H1z" fill="#5c84d0" stroke="#2c4c98" />
      <circle cx="8" cy="5" r="2.500" fill="#c0d4f4" />
      <ellipse cx="11" cy="10" rx="4" ry="2" fill="#f0c040" stroke="#a87810" />
      <ellipse cx="8" cy="13.500" rx="4" ry="2" fill="#f0c040" stroke="#a87810" />
    </>
  ),
  decimals: (
    <>
      <path d="M1 4h6M3 2L1 4l2 2" fill="none" stroke="#2c58c0" strokeWidth="1.500" />
      <text x="7" y="7" fontSize="8" fontFamily="Liberation Sans">.0</text>
      <text x="3" y="15" fontSize="8" fontFamily="Liberation Sans">.00</text>
    </>
  ),
  pdf: (
    <>
      <path d="M3 1h8l4 4v10H3z" fill="#fff" stroke="#908080" />
      <path d="M1 1h8v4H1z" fill="#d81c1c" />
      <path d="M4 14q4-4 4-8 1 5 6 5-5 0-10 3z" fill="none" stroke="#d81c1c" strokeWidth="1.200" />
    </>
  ),
  pdfMail: (
    <>
      <path d="M2 3h9l3 3v9H2z" fill="#fff" stroke="#908080" />
      <path d="M0 4h7v4H0z" fill="#d81c1c" />
      <path d="M3 14q4-4 4-8 1 5 6 5-5 0-10 3z" fill="none" stroke="#d81c1c" strokeWidth="1.200" />
      <path d="M7 0h9v5h-4l-2 2V5H7z" fill="#f8d030" stroke="#c09810" />
    </>
  ),
  book: (
    <>
      <path d="M5 1h8l2 2v12H5z" fill="#e8eefc" stroke="#5874b0" />
      <path d="M1 2h10v10H1z" fill="#e8f6e8" stroke="#2c7c3c" />
      <path d="M3 4l6 6M9 4l-6 6" stroke="#2c7c3c" strokeWidth="2" />
    </>
  ),
};

const XlIcon = ({ name }: { name: string }) => (
  <svg width="16" height="16" viewBox="0 0 16 16" className="shrink-0">
    {xl[name]}
  </svg>
);

const tray = (names: string[]) =>
  names.map((n) => (
    <XlButton key={n} label={n}>
      <XlIcon name={n} />
    </XlButton>
  ));

const xlMenus = [
  ['文件', 'F'],
  ['编辑', 'E'],
  ['视图', 'V'],
  ['插入', 'I'],
  ['格式', 'O'],
  ['工具', 'T'],
  ['数据', 'D'],
  ['窗口', 'W'],
  ['帮助', 'H'],
];

const bar = 'flex h-[25px] items-center rounded-l bg-linear-to-b from-[#f5f4f1] to-[#dfdcd5]';

const XlToolbars = () => (
  <div className={`bg-linear-to-r from-[#d8d5cd] to-[#f4f4f2] pt-px text-[12px] ${cjk}`}>
    <div className={`ml-[356px] overflow-hidden ${bar}`}>
      <Grip />
      <Pick label="font" value="宋体" width="w-[151px]" />
      <span className="w-[2px] shrink-0"></span>
      <Pick label="size" value="12" width="w-[45px]" />
      <Sep />
      <XlButton label="bold"><b className={`text-[15px] ${serif}`}>B</b></XlButton>
      <XlButton label="italic"><b className={`text-[15px] italic ${serif}`}>I</b></XlButton>
      <XlButton label="underline" on><b className={`text-[15px] underline ${serif}`}>U</b></XlButton>
      <Sep />
      <XlButton label="align left" on><XlIcon name="alignLeft" /></XlButton>
      {tray(['alignCenter', 'alignRight', 'mergeCells'])}
      <Sep />
      {tray(['currency'])}
      <XlButton label="percent"><span className="text-[14px]">%</span></XlButton>
      <XlButton label="comma"><b className={`text-[18px] ${serif}`}>,</b></XlButton>
      {tray(['decimals'])}
    </div>
    <div className={`mt-px w-fit ${bar}`}>
      <Grip />
      {tray(['new', 'open', 'save', 'permission', 'mail'])}
      <Sep />
      {tray(['print', 'preview'])}
      <Sep />
      {tray(['spelling', 'research'])}
      <Sep />
      {tray(['cut', 'copy', 'paste'])}
      <Arrow />
      {tray(['brush'])}
      <Sep />
      {tray(['undo'])}
      <Arrow />
      {tray(['redo'])}
      <Arrow dim />
      <Sep />
      {tray(['link', 'sum'])}
      <Arrow />
      {tray(['sortAsc', 'sortDesc'])}
      <Sep />
      {tray(['chart'])}
      <XlButton label="drawing" on><XlIcon name="drawing" /></XlButton>
      <span className="w-[3px]"></span>
      <Pick label="zoom" value="100%" width="w-[65px]" />
      <span className="w-[2px]"></span>
      {tray(['help'])}
      <EndCap />
    </div>
    <nav className="flex h-[25px] items-center">
      <Grip />
      <span className="mr-[9px] ml-[2px]">
        <XlIcon name="book" />
      </span>
      <div className="flex items-center gap-[16px]">
        {xlMenus.map(([name, key]) => (
          <button key={key} className="flex items-baseline">
            {name}
            <span className="text-[10px]">
              (<u>{key}</u>)
            </span>
          </button>
        ))}
        <button className="text-[10px]">
          Adobe PDF(<u>B</u>)
        </button>
      </div>
    </nav>
    <div className={`w-fit ${bar}`}>
      <Grip />
      {tray(['pdf', 'pdfMail'])}
      <EndCap />
    </div>
    <div className="flex h-[19px] items-stretch bg-[#d4d0c8] text-[13px]">
      <input aria-label="name box" defaultValue="J10" className="w-[106px] bg-white text-center outline-none" />
      <button aria-label="names" className="flex w-[18px] items-center justify-center">
        <Caret />
      </button>
      <label htmlFor="fx" className={`w-[62px] pr-[4px] text-right text-[14px] font-bold italic leading-[18px] ${serif}`}>
        fx
      </label>
      <input id="fx" defaultValue="Sheet3!A1" className="min-w-0 flex-1 bg-white pl-[11px] outline-none" />
    </div>
  </div>
);

const cols = ['A', 'B', 'C', 'D', 'E', 'F', 'G', 'H', 'I', 'J', 'K'];
const line = 'border-r border-b border-black px-0 pt-[3px] pb-0';
const faint = 'border-b border-[#c0c0c0]';

const RowHead = ({ n }: { n: number }) => (
  <th
    scope="row"
    className={`border-r border-b border-[#808080] p-0 align-bottom text-[13px] font-normal leading-[13px] ${
      n === 10 ? 'border-b-[#0a246a] bg-[#b1bbd6]' : 'bg-[#d4d0c8]'
    }`}
  >
    {n}
  </th>
);

const cam = [
  { text: '周期格式为年周', yellow: true },
  { text: '如图字符层类似圆环，将内环删除,外环加大', yellow: true, link: 'Sheet2!A1' },
  { text: '如图贴片层类似圆环删除外环', yellow: true, link: 'Sheet3!A1' },
  { text: '拼板方式如图', link: 'Sheet4!A1' },
  { text: '' },
  { text: '' },
  { text: '' },
];

const Sheet = () => (
  <table className={`w-full min-w-[830px] table-fixed border-separate border-spacing-0 border-t border-l border-[#808080] bg-white text-center text-[15px] ${cjk}`}>
    <colgroup>
      <col className="w-[33px]" />
      <col className="w-[58px]" />
      <col className="w-[37px]" />
      <col className="w-[89px]" />
      <col className="w-[60px]" />
      <col className="w-[82px]" />
      <col className="w-[53px]" />
      <col className="w-[49px]" />
      <col className="w-[89px]" />
      <col className="w-[140px]" />
      <col className="w-[88px]" />
      <col />
    </colgroup>
    <thead>
      <tr className="h-[20px]">
        <td className="border-r border-b border-[#808080] bg-[#d4d0c8] p-0"></td>
        {cols.map((c) => (
          <th
            key={c}
            scope="col"
            className={`border-r border-b border-[#808080] px-0 pt-[3px] pb-0 text-[14px] font-normal leading-[16px] ${
              c === 'J' ? 'border-b-[#0a246a] bg-[#b1bbd6]' : 'bg-[#d4d0c8]'
            }`}
          >
            {c}
          </th>
        ))}
      </tr>
    </thead>
    <tbody>
      <tr className="h-[30px]">
        <RowHead n={1} />
        <td colSpan={10} className="border-b border-black px-0 pt-[3px] pb-0 text-[24px] font-bold leading-[26px]">预审指示</td>
        <td className={faint}></td>
      </tr>
      <tr className="h-[40px] font-bold leading-[18px]">
        <RowHead n={2} />
        <td className={`${line} text-[16px]`}>
          产品
          <br />
          编号
        </td>
        <td colSpan={3} className={line}>2S89F00AA0</td>
        <td className={`${line} text-[16px]`}>预审日期</td>
        <td colSpan={2} className={line}>2015/8/28</td>
        <td className={`${line} text-[16px]`}>预审人</td>
        <td className={`${line} text-[16px]`}>戴强平</td>
        <td className={`${line} text-[16px]`}>附件/附图</td>
        <td className={faint}></td>
      </tr>
      <tr className="h-[30px] text-[16px]">
        <RowHead n={3} />
        <td rowSpan={4} className={`${line} font-bold leading-[19px] text-[#0000cc]`}>待确认光绘时一起确认问题</td>
        <td className={line}>序号</td>
        <td colSpan={5} className={`${line} font-bold text-[#0000cc]`}>待与客户确认问题(原因与内容)</td>
        <td colSpan={2} className={`${line} font-bold text-[#0000cc]`}>预审建议</td>
        <td className={line}></td>
        <td className={faint}></td>
      </tr>
      {[1, 2, 3].map((n) => (
        <tr key={n} className="h-[34px]">
          <RowHead n={n + 3} />
          <td className={line}>{n}</td>
          <td colSpan={5} className={line}></td>
          <td colSpan={2} className={line}></td>
          <td className={line}></td>
          <td className={faint}></td>
        </tr>
      ))}
      <tr className="h-[45px]">
        <RowHead n={7} />
        <td colSpan={2} className={`${line} text-[16px] font-bold leading-[19px]`}>
          工艺流程
          <br />
          指示
        </td>
        <td colSpan={7} className={line}></td>
        <td className={line}></td>
        <td className={faint}></td>
      </tr>
      {cam.map((row, i) => (
        <tr key={i} className="h-[32px]">
          <RowHead n={i + 8} />
          {i === 0 && (
            <td rowSpan={7} className={`${line} font-bold leading-[19px]`}>
              CAM
              <br />
              <span className="text-[16px]">指示</span>
            </td>
          )}
          <td className={`${line} font-bold`}>{i + 1}</td>
          <td colSpan={7} className={`${line} text-left text-[14px] font-bold ${row.yellow ? 'bg-[#ffff00]' : ''}`}>
            <span className="pl-[3px]">{row.text}</span>
          </td>
          <td className={`${line} text-left text-[13px] ${i === 2 ? 'outline-3 -outline-offset-2 outline-double outline-black' : ''}`}>
            {row.link && (
              <a href={`#${row.link}`} className="ml-[2px] text-[#800080] underline">
                {row.link}
              </a>
            )}
          </td>
          <td className={faint}></td>
        </tr>
      ))}
    </tbody>
  </table>
);

const Excel = () => (
  <section className="absolute top-[386px] right-0 bottom-[10px] left-[1085px] overflow-hidden border-t-2 border-l-2 border-[#f4f2ee] bg-[#d4d0c8] pt-[2px] pl-[4px]">
    <header className={`flex h-[18px] items-center gap-[2px] bg-linear-to-r from-[#0a246a] to-[#6a8ac4] text-[12px] font-bold whitespace-nowrap text-white ${mono}`}>
      <XlIcon name="book" />
      <h2>Microsoft Excel - 2S89F00AA0-预审指示.xls</h2>
    </header>
    <XlToolbars />
    <Sheet />
    <span className="absolute left-[107px] top-[480px] h-[30px] w-[281px] border-2 border-[#d81414] shadow-[2px_3px_4px_rgba(0,0,0,0.45)]"></span>
  </section>
);

/* ---------- desktop ---------- */

const Task = ({ color = 'bg-[#10206c]', children }: { color?: string; children?: React.ReactNode }) => (
  <button className={`flex h-[22px] w-[151px] shrink-0 items-start gap-3 overflow-hidden px-[7px] pt-[4px] text-left text-[12px] leading-[16px] whitespace-nowrap ${winBevel}`}>
    <span className={`h-[14px] w-[13px] shrink-0 ${color}`}></span>
    {children}
  </button>
);

const Taskbar = () => (
  <footer className={`flex h-[10px] items-start gap-[2px] overflow-hidden border-t border-white bg-[#d4d0c8] pl-[2px] ${cjk}`}>
    <button className={`flex h-[22px] w-[46px] shrink-0 items-start gap-1 px-[3px] pt-[3px] text-[12px] font-bold leading-[16px] whitespace-nowrap ${winBevel}`}>
      <span className="mt-px size-[12px] shrink-0 rounded-tl-lg bg-[#d8661c]"></span>
      开始
    </button>
    <span className="mx-[6px] h-[20px] w-px shrink-0 bg-[#808080]"></span>
    <span className="mt-[4px] mr-[8px] ml-[10px] size-[15px] shrink-0 bg-[#5c4c78]"></span>
    <Task color="rounded-tl-full bg-[#dc3018]" />
    <span className="mx-[8px] mt-[4px] size-[15px] shrink-0 bg-[#5c4c78]"></span>
    <Task color="bg-[#2040b8]" />
    <span className="mx-[8px] mt-[4px] size-[13px] shrink-0 border border-[#5888b8] bg-[#e4ecf4]"></span>
    <Task color="rounded-t-full bg-[#e09030]">以实体接附环性的</Task>
    <Task color="rounded-t border border-[#489870] bg-[#a0d0b0]">工程系统 - 版本</Task>
    <Task color="bg-[#189898]" />
    <Task />
    <Task />
    <Task />
    <Task />
    <Task color="bg-[#58a8c8]">制作规范</Task>
    <span className="mx-[8px] h-[20px] w-px shrink-0 bg-[#808080]"></span>
    <span className="mt-[5px] size-[12px] shrink-0 bg-[#8c8c8c]"></span>
    <span className="ml-[4px] flex h-[22px] flex-1 gap-[12px] border border-[#808080] px-[14px] pt-[4px]">
      <span className="size-[12px] rounded-full bg-[#dc3c28]"></span>
      <span className="size-[12px] rounded-full bg-[#88c8a0]"></span>
      <span className="size-[12px] rounded-full bg-[#88b020]"></span>
      <span className="size-[12px] rounded-tl-full bg-[#dc3018]"></span>
    </span>
  </footer>
);

const App = () => {
  return (
    <div className="relative flex h-screen flex-col overflow-hidden bg-[#d4d0c8] text-black">
      <Editor />
      <div className="h-[4px] border-t border-[#404040] bg-[#bcd2f4]"></div>
      <Taskbar />
      <Popview />
      <Excel />
      <div className="absolute top-[816px] -right-[30px] flex size-[50px] items-center rounded-full border-3 border-[#d8d8d8] bg-linear-to-b from-[#6cd07c] to-[#1c9c48] pl-px text-[14px] font-bold text-white shadow-[1px_4px_6px_rgba(0,0,0,0.5)]">
        <span className="font-['Open_Sans',sans-serif]">46</span>
      </div>
    </div>
  );
};

export default App;
